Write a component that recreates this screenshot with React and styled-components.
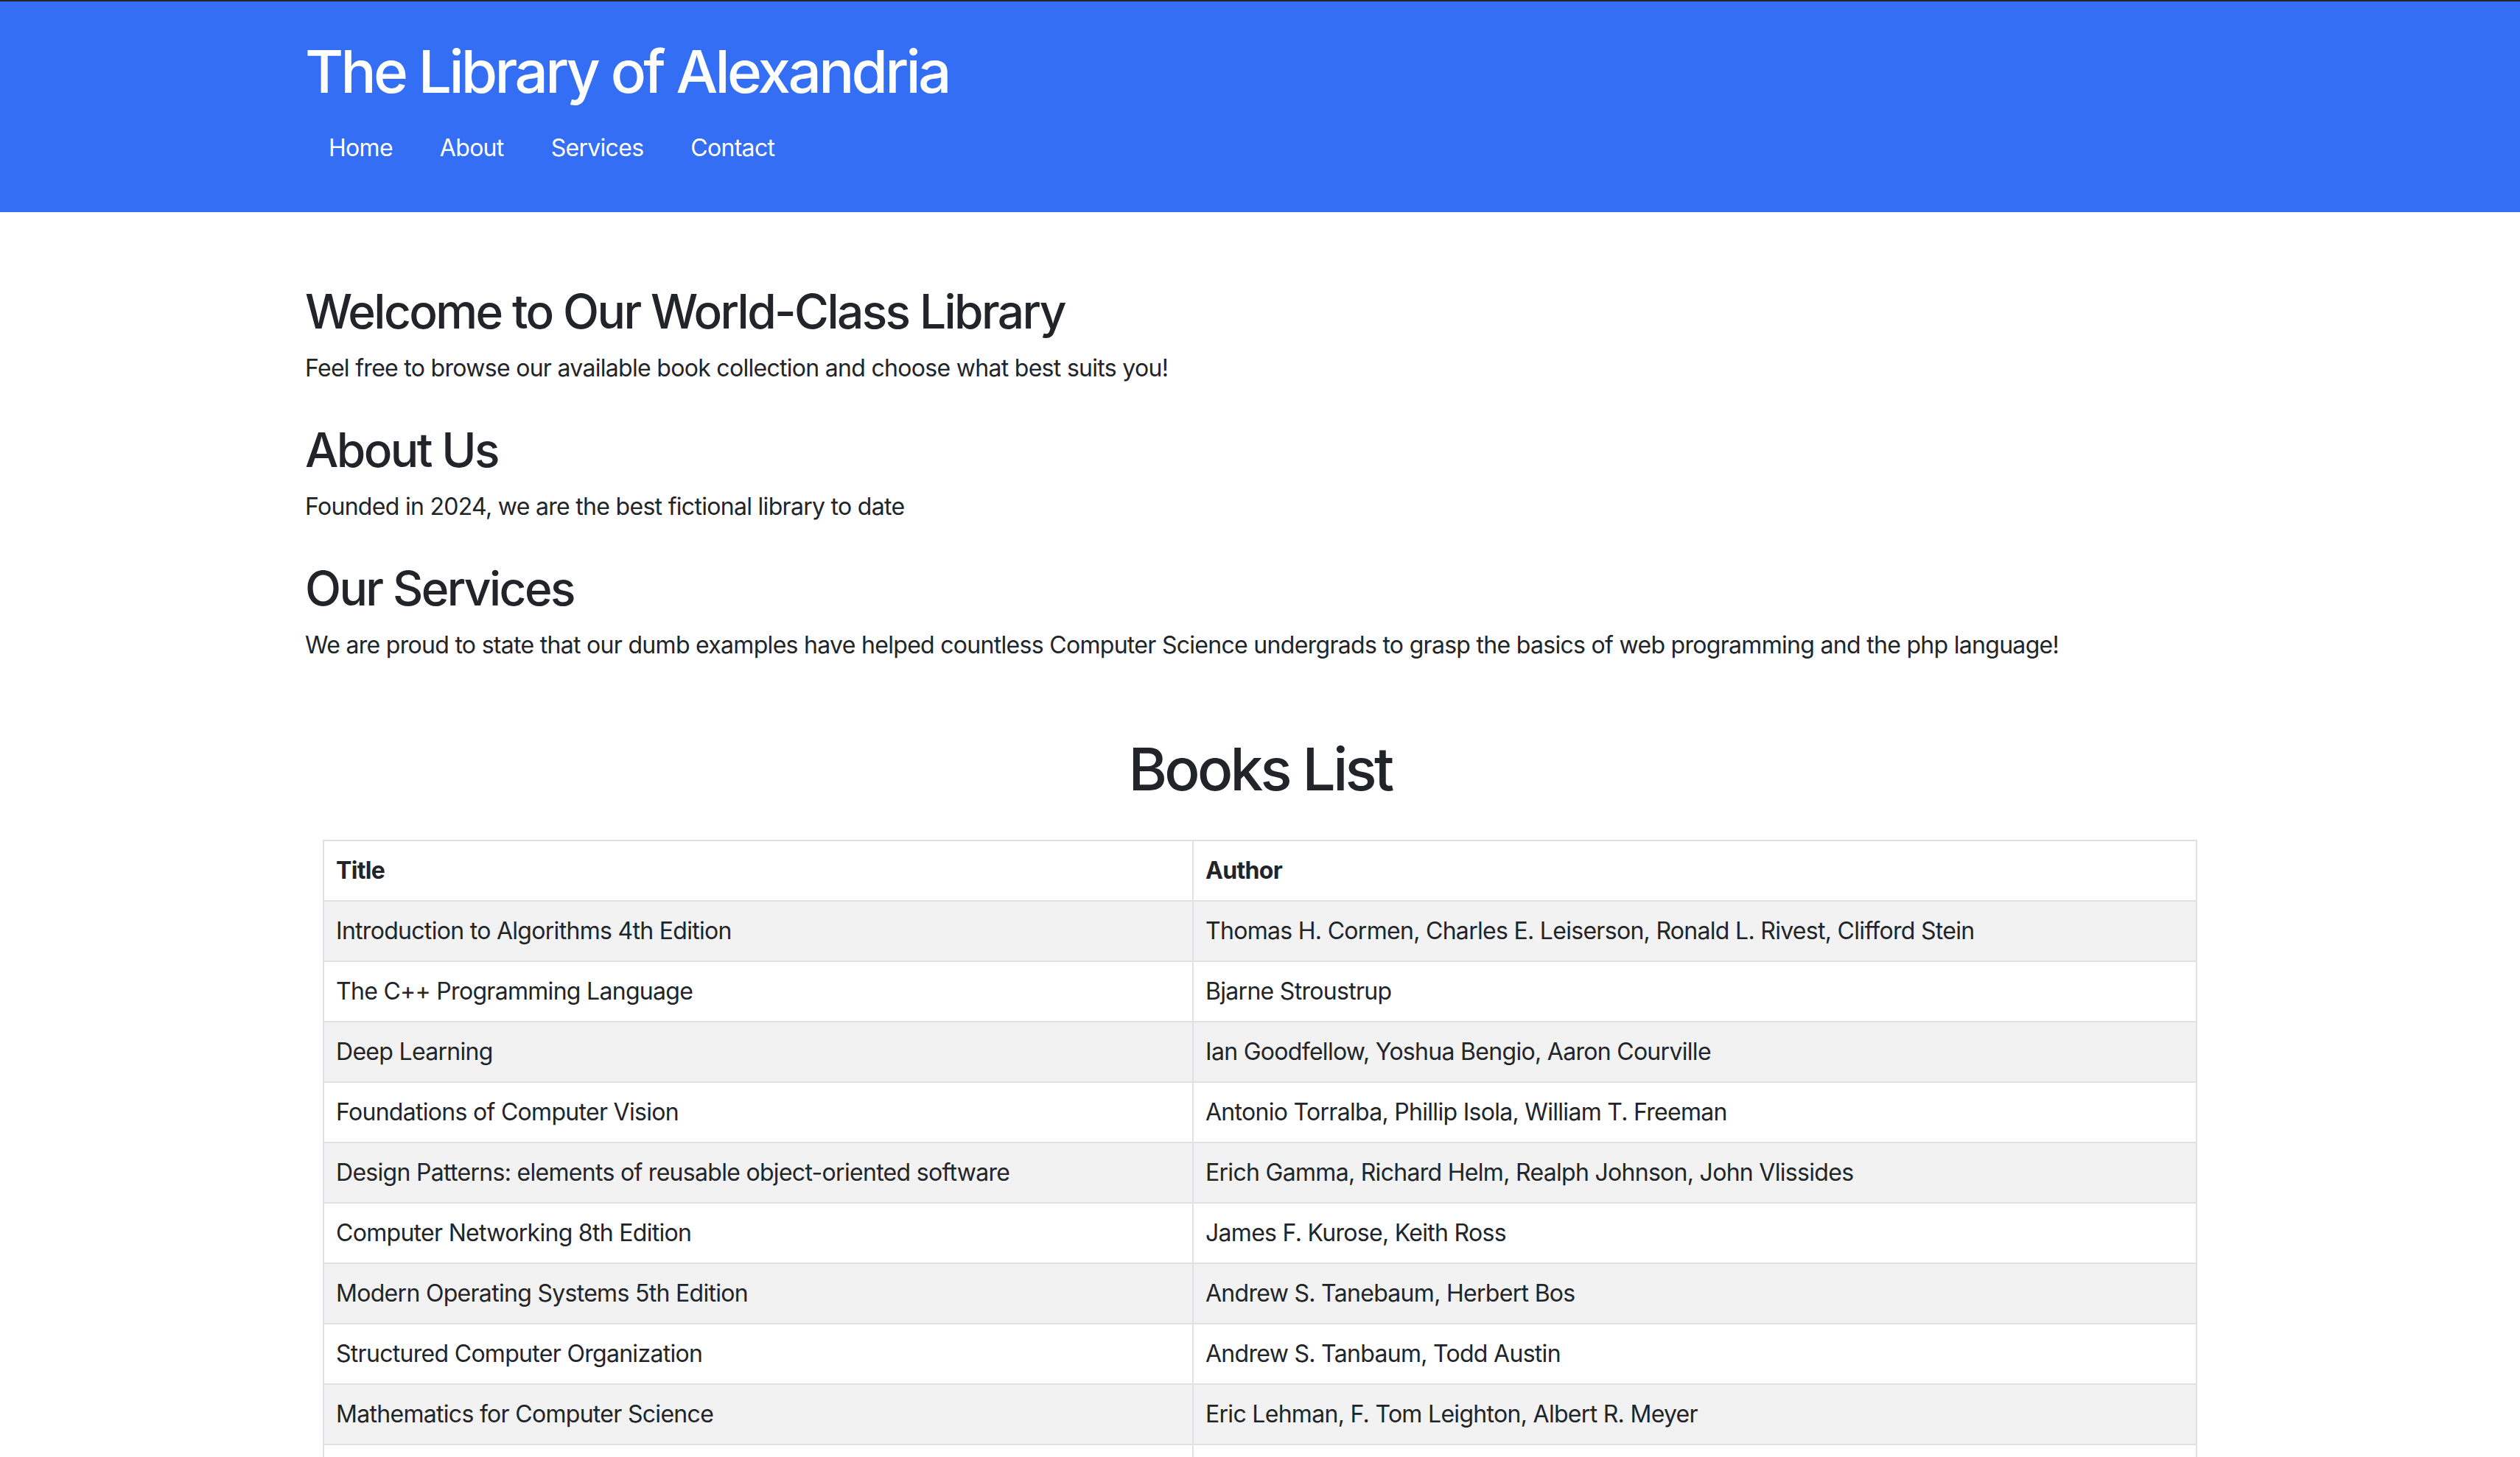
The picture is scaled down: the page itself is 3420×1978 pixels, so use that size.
import React from "react";
import styled, { createGlobalStyle } from "styled-components";

const GlobalStyle = createGlobalStyle`
  html, body { margin: 0; padding: 0; background: #ffffff; }
  body {
    font-family: Inter, "Noto Sans", "Liberation Sans", sans-serif;
    color: #212529;
    -webkit-font-smoothing: antialiased;
  }
  * { box-sizing: border-box; }
`;

const Header = styled.header`
  background: #336ef5;
  border-top: 2px solid #262626;
  padding: 47px 0 47px;
  color: #ffffff;
`;

const Container = styled.div`
  width: 2640px;
  margin: 0 auto;
  padding: 0 24px;
`;

const SiteTitle = styled.h1`
  margin: 0 0 16px;
  font-size: 80px;
  line-height: 96px;
  font-weight: 500;
  letter-spacing: -3.7px;
`;

const Nav = styled.nav`
  display: flex;
  align-items: center;
`;

const NavLink = styled.a`
  display: block;
  padding: 16px 32px;
  font-size: 32px;
  line-height: 48px;
  letter-spacing: -0.7px;
  color: #ffffff;
  text-decoration: none;
`;

const Main = styled.main`
  padding-top: 96px;
`;

const Section = styled.section`
  margin-bottom: 48px;
`;

const SectionTitle = styled.h2`
  margin: 0 0 15px;
  font-size: 64px;
  line-height: 77px;
  font-weight: 500;
  letter-spacing: -2.6px;
`;

const Text = styled.p`
  margin: 0;
  font-size: 32px;
  line-height: 48px;
  letter-spacing: -0.7px;
`;

const ListTitle = styled.h1`
  margin: 96px 0 48px;
  text-align: center;
  font-size: 80px;
  line-height: 96px;
  font-weight: 500;
  letter-spacing: -3.7px;
`;

const TableWrap = styled.div`
  padding: 0 24px;
`;

const Table = styled.table`
  width: 100%;
  border-collapse: collapse;
  table-layout: fixed;
  font-size: 32px;
  line-height: 48px;
  letter-spacing: -0.7px;
  color: #212529;
`;

const HeadCell = styled.th`
  border: 2px solid #dee2e6;
  padding: 16px;
  text-align: left;
  font-weight: 700;
  width: ${(p) => p.$w || "auto"};
`;

const Row = styled.tr`
  background: ${(p) => (p.$striped ? "#f2f2f2" : "#ffffff")};
`;

const Cell = styled.td`
  border: 2px solid #dee2e6;
  padding: 16px;
  font-weight: 400;
  white-space: nowrap;
`;

const books = [
  ["Introduction to Algorithms 4th Edition", "Thomas H. Cormen, Charles E. Leiserson, Ronald L. Rivest, Clifford Stein"],
  ["The C++ Programming Language", "Bjarne Stroustrup"],
  ["Deep Learning", "Ian Goodfellow, Yoshua Bengio, Aaron Courville"],
  ["Foundations of Computer Vision", "Antonio Torralba, Phillip Isola, William T. Freeman"],
  ["Design Patterns: elements of reusable object-oriented software", "Erich Gamma, Richard Helm, Realph Johnson, John Vlissides"],
  ["Computer Networking 8th Edition", "James F. Kurose, Keith Ross"],
  ["Modern Operating Systems 5th Edition", "Andrew S. Tanebaum, Herbert Bos"],
  ["Structured Computer Organization", "Andrew S. Tanbaum, Todd Austin"],
  ["Mathematics for Computer Science", "Eric Lehman, F. Tom Leighton, Albert R. Meyer"],
  ["\u00a0", "\u00a0"],
];

export default function App() {
  return (
    <>
      <GlobalStyle />
      <Header>
        <Container>
          <SiteTitle>The Library of Alexandria</SiteTitle>
          <Nav>
            <NavLink href="#">Home</NavLink>
            <NavLink href="#">About</NavLink>
            <NavLink href="#">Services</NavLink>
            <NavLink href="#">Contact</NavLink>
          </Nav>
        </Container>
      </Header>
      <Main>
        <Container>
          <Section>
            <SectionTitle>Welcome to Our World-Class Library</SectionTitle>
            <Text>Feel free to browse our available book collection and choose what best suits you!</Text>
          </Section>
          <Section>
            <SectionTitle>About Us</SectionTitle>
            <Text>Founded in 2024, we are the best fictional library to date</Text>
          </Section>
          <Section>
            <SectionTitle>Our Services</SectionTitle>
            <Text>
              We are proud to state that our dumb examples have helped countless Computer Science undergrads to grasp the basics of web programming and the php language!
            </Text>
          </Section>
          <ListTitle>Books List</ListTitle>
          <TableWrap>
            <Table>
              <thead>
                <tr>
                  <HeadCell $w="46.42%">Title</HeadCell>
                  <HeadCell>Author</HeadCell>
                </tr>
              </thead>
              <tbody>
                {books.map(([title, author], i) => (
                  <Row key={i} $striped={i % 2 === 0}>
                    <Cell>{title}</Cell>
                    <Cell>{author}</Cell>
                  </Row>
                ))}
              </tbody>
            </Table>
          </TableWrap>
        </Container>
      </Main>
    </>
  );
}
